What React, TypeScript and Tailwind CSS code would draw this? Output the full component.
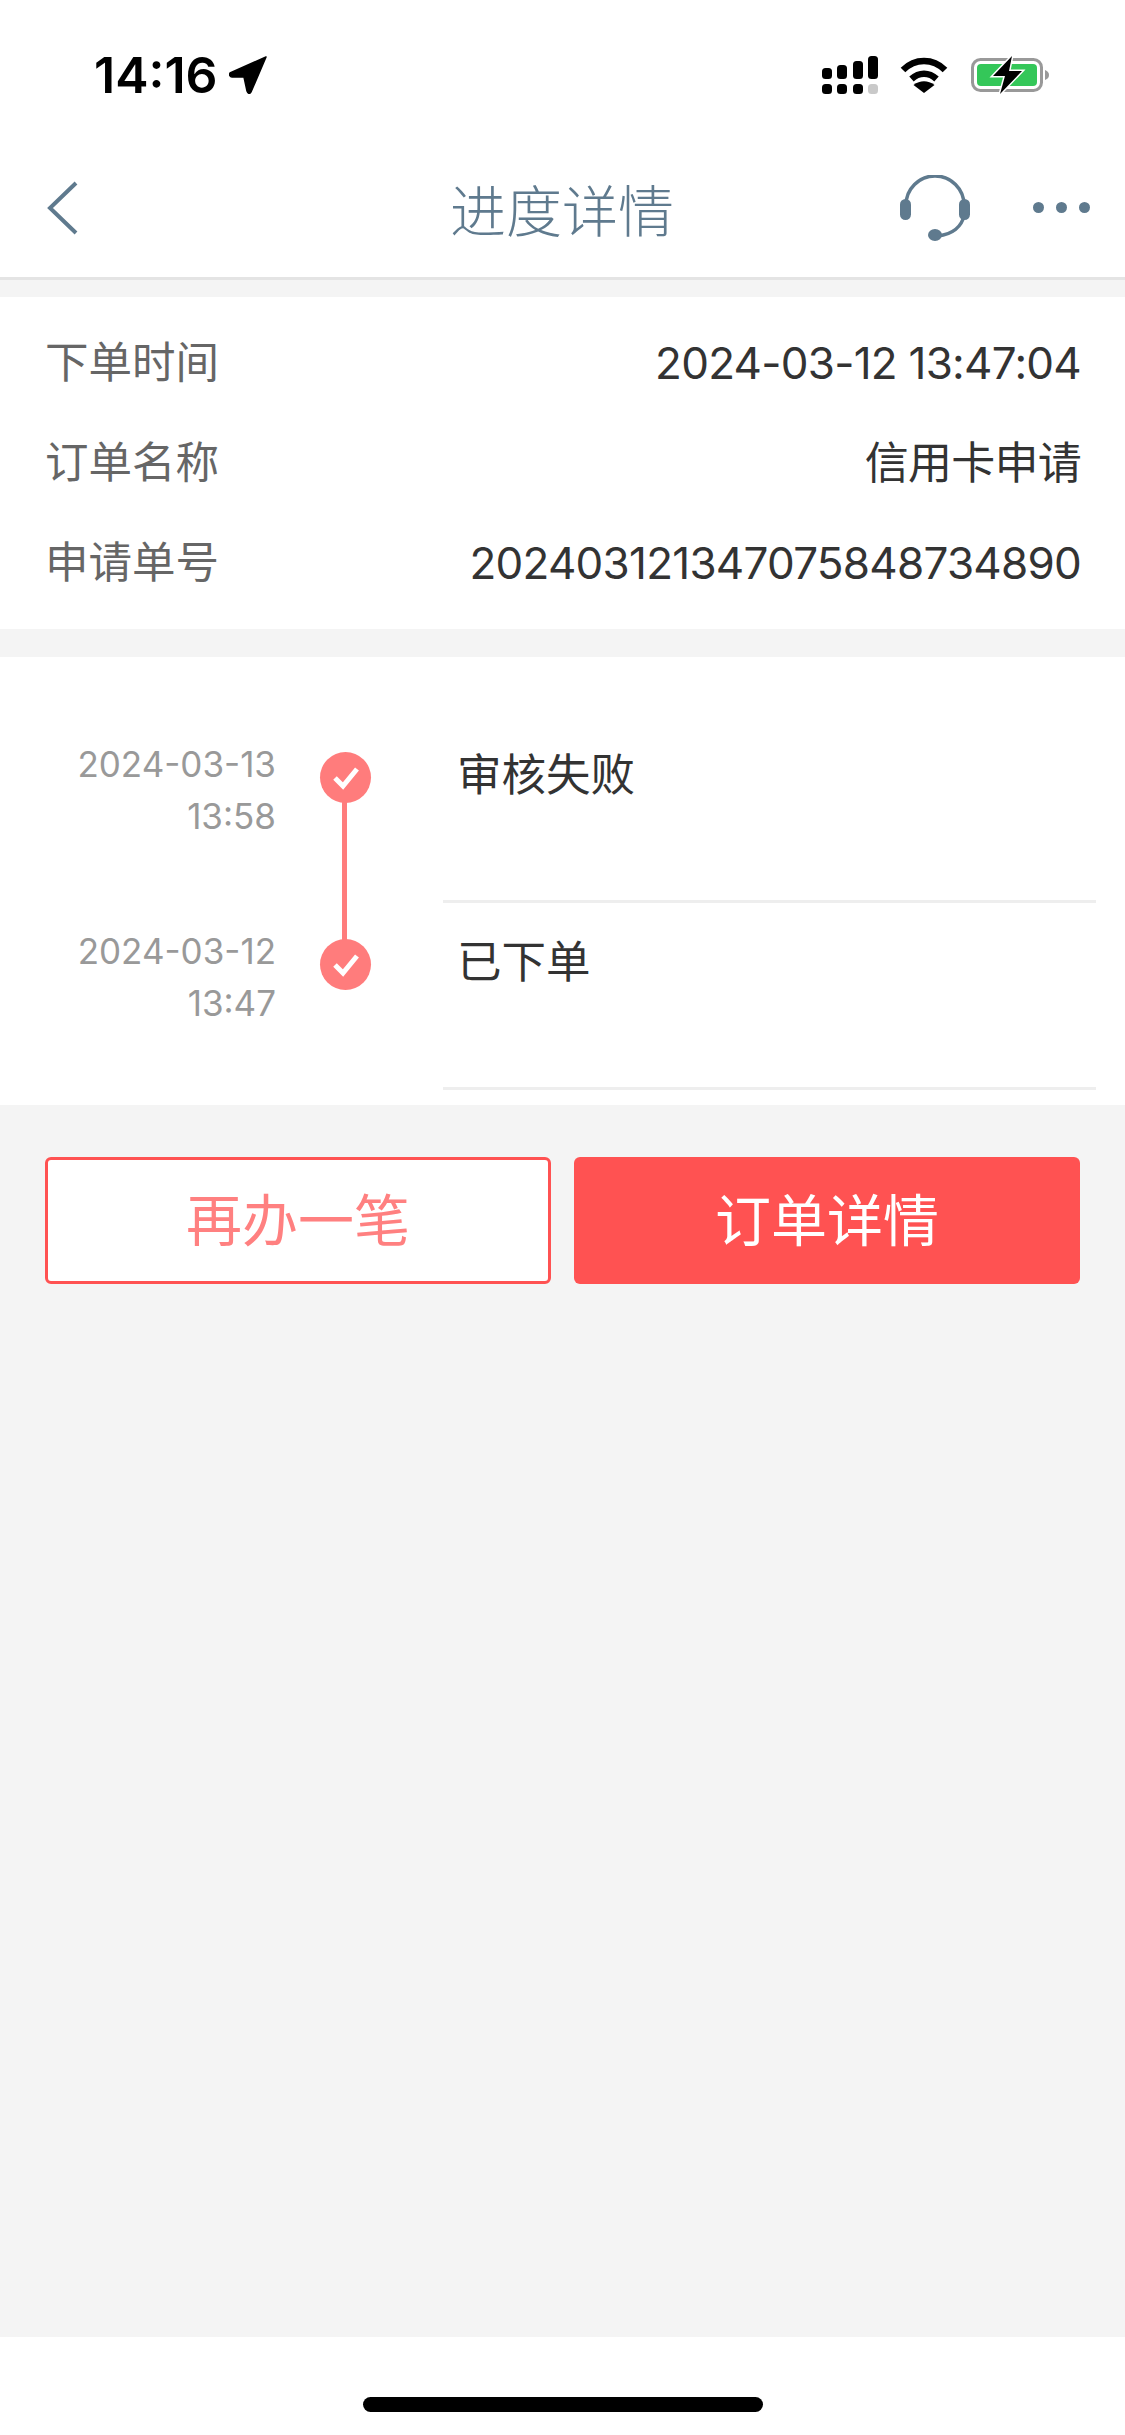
const cjk = "font-['Inter','Noto_Sans_CJK_SC',sans-serif]";

function StatusIcons() {
  return (
    <div className="flex items-center">
      {/* Signal */}
      <svg width="57" height="38" viewBox="0 0 57 38" className="block">
        <g fill="#000">
          <rect x="0" y="12" width="10" height="11" rx="3.5" />
          <rect x="15" y="9" width="10" height="14" rx="3.5" />
          <rect x="31" y="5" width="10" height="18" rx="3.5" />
          <rect x="46" y="0" width="10" height="23" rx="3.5" />
          <rect x="0" y="28" width="10" height="10" rx="3.5" />
          <rect x="15" y="28" width="10" height="10" rx="3.5" />
          <rect x="31" y="28" width="10" height="10" rx="3.5" />
        </g>
        <rect x="46" y="28" width="10" height="10" rx="3.5" fill="#c9c9c9" />
      </svg>
      {/* Wifi */}
      <svg width="48" height="36" viewBox="0 0 48 36" className="ml-[21px] block">
        <path d="M3 13 C15 1 33 1 45 13" fill="none" stroke="#000" strokeWidth="6.5" />
        <path d="M11.5 22 C19 15 29 15 36.5 22" fill="none" stroke="#000" strokeWidth="6.5" />
        <path d="M13.5 28 C20 23 28 23 34.5 28 L24 36 Z" fill="#000" />
      </svg>
      {/* Battery */}
      <svg width="78" height="38" viewBox="0 0 78 38" className="ml-[23px] block">
        <rect x="1.5" y="3.5" width="69" height="31" rx="8" fill="#fff" stroke="#999" strokeWidth="3" />
        <rect x="6" y="8" width="60" height="22" rx="4" fill="#34c759" />
        <path d="M74 14 C77 15 78 17 78 19 C78 21 77 23 74 24 Z" fill="#999" />
        <path d="M41 0 L22 20 L34 20 L29 38 L51 15 L38 15 Z" fill="#000" stroke="#fff" strokeWidth="3" paintOrder="stroke" />
      </svg>
    </div>
  );
}

function InfoRow({ label, value }: { label: string; value: string }) {
  return (
    <div className="flex h-[100px] items-center justify-between">
      <span className="text-[43.5px] text-[#666]">{label}</span>
      <span className="text-[44px] tracking-[-0.75px] text-[#333]">{value}</span>
    </div>
  );
}

function Dot() {
  return (
    <div className="relative z-10 flex h-[51px] w-[51px] items-center justify-center rounded-full bg-[#ff7c7c]">
      <svg width="28" height="24" viewBox="0 0 28 24" fill="none">
        <path d="M3 12 L11 20 L25 3" stroke="#fff" strokeWidth="5" />
      </svg>
    </div>
  );
}

function TimelineRow({ date, time, title, connector }: { date: string; time: string; title: string; connector?: boolean }) {
  return (
    <div className="relative flex h-[187px]">
      <div className="w-[276px] pt-[22px] text-right text-[35px] leading-[52px] text-[#999]">
        <div>{date}</div>
        <div>{time}</div>
      </div>
      <div className="ml-[44px] pt-[36px]">
        <Dot />
      </div>
      {connector && <div className="absolute left-[342px] top-[80px] h-[150px] w-[5px] bg-[#ff7c7c]" />}
      <div className="ml-[72px] mr-[29px] flex-1 border-b-[3px] border-[#eee] pl-[14px] pt-[29px] text-[44.5px] leading-[60px] text-[#333]">
        {title}
      </div>
    </div>
  );
}

export default function App() {
  return (
    <div className={`flex h-[2435px] w-[1125px] flex-col bg-[#f4f4f4] ${cjk}`}>
      {/* Status bar */}
      <div className="flex h-[138px] items-center justify-between bg-white pl-[94px] pr-[76px] pt-[12px]">
        <div className="flex items-center">
          <span className="font-['Inter',sans-serif] text-[50px] font-semibold leading-none text-black">14:16</span>
          <svg width="38" height="38" viewBox="0 0 38 38" className="ml-[11px] block">
            <path d="M37 1 L1 17 C0 19 1 21 3 21 L15 21 L18 35 C19 38 21 38 22 36 Z" fill="#000" stroke="#000" strokeWidth="1.5" strokeLinejoin="round" />
          </svg>
        </div>
        <StatusIcons />
      </div>

      {/* Nav bar */}
      <div className="flex h-[142px] items-center justify-between border-b-[3px] border-[#e4e4e4] bg-white pl-[47px] pr-[35px]">
        <svg width="32" height="54" viewBox="0 0 32 54" fill="none" className="block">
          <path d="M29 2 L3 27 L29 52" stroke="#5f7a8e" strokeWidth="4" />
        </svg>
        <span className="ml-[371px] pt-[8px] text-[56px] font-light leading-none text-[#5f7a8e]">进度详情</span>
        <div className="ml-auto flex items-center">
          <svg width="70" height="66" viewBox="0 0 70 66" fill="none" className="block">
            <path d="M6 30 A29 29 0 0 1 64 30 L64 40 C62 52 52 59 38 61" stroke="#5f7a8e" strokeWidth="3.5" />
            <rect x="0" y="24" width="11" height="21" rx="5.5" fill="#5f7a8e" />
            <rect x="59" y="24" width="11" height="21" rx="5.5" fill="#5f7a8e" />
            <ellipse cx="35" cy="60" rx="7" ry="6" fill="#5f7a8e" />
          </svg>
          <div className="ml-[63px] flex gap-[12px]">
            <div className="h-[11px] w-[11px] rounded-full bg-[#5f7a8e]" />
            <div className="h-[11px] w-[11px] rounded-full bg-[#5f7a8e]" />
            <div className="h-[11px] w-[11px] rounded-full bg-[#5f7a8e]" />
          </div>
        </div>
      </div>

      {/* Order info */}
      <div className="mt-[17px] bg-white pl-[45px] pr-[44px] py-[16px]">
        <InfoRow label="下单时间" value="2024-03-12 13:47:04" />
        <InfoRow label="订单名称" value="信用卡申请" />
        <InfoRow label="申请单号" value="202403121347075848734890" />
      </div>

      {/* Progress */}
      <div className="mt-[28px] bg-white pb-[15px] pt-[59px]">
        <TimelineRow date="2024-03-13" time="13:58" title="审核失败" connector />
        <TimelineRow date="2024-03-12" time="13:47" title="已下单" />
      </div>

      {/* Actions */}
      <div className="mt-[52px] grid grid-cols-2 gap-[23px] px-[45px]">
        <button className="h-[127px] rounded-[6px] border-[3px] border-[#ff5252] bg-white text-[56px] text-[#ff8080]">再办一笔</button>
        <button className="h-[127px] rounded-[6px] bg-[#ff5252] text-[56px] text-white">订单详情</button>
      </div>

      {/* Home indicator */}
      <div className="mt-auto flex h-[98px] justify-center bg-white pt-[60px]">
        <div className="h-[15px] w-[400px] rounded-full bg-black" />
      </div>
    </div>
  );
}
